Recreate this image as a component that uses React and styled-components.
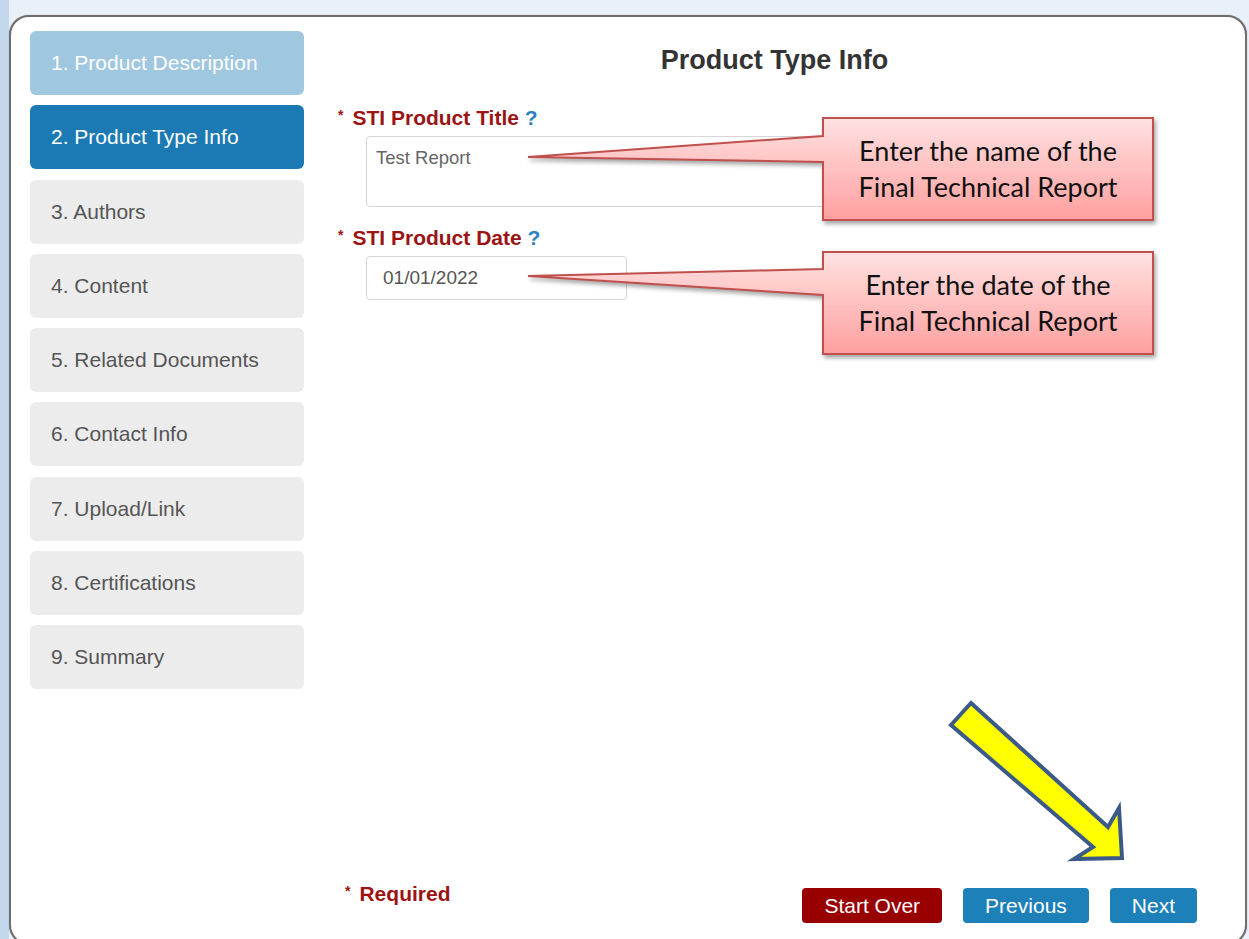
import React from 'react'
import styled, { createGlobalStyle } from 'styled-components'

const GlobalStyle = createGlobalStyle`
  html, body {
    margin: 0;
    padding: 0;
    overflow: hidden;
  }
  body {
    font-family: "Liberation Sans", Arial, sans-serif;
    background: #eaf0f7;
  }
`

const steps = [
  { label: '1. Product Description', state: 'done' },
  { label: '2. Product Type Info', state: 'active' },
  { label: '3. Authors' },
  { label: '4. Content' },
  { label: '5. Related Documents' },
  { label: '6. Contact Info' },
  { label: '7. Upload/Link' },
  { label: '8. Certifications' },
  { label: '9. Summary' },
]

function Callout({ x, y, w, h, b1, b2, tip, lines, id }) {
  const d = `M0,0 H${w} V${h} H0 V${b2} L${tip[0]},${tip[1]} L0,${b1} Z`
  return (
    <CalloutBox style={{ left: x, top: y, width: w, height: h }}>
      <CalloutShape width={w} height={h} overflow="visible">
        <defs>
          <linearGradient id={id} x1="0" y1="0" x2="0" y2={h} gradientUnits="userSpaceOnUse">
            <stop offset="0" stopColor="#ffe2e2" />
            <stop offset="1" stopColor="#ff9f9f" />
          </linearGradient>
        </defs>
        <path d={d} fill={`url(#${id})`} stroke="#c0504d" strokeWidth="2" />
      </CalloutShape>
      <CalloutText>
        {lines.map(l => <span key={l}>{l}</span>)}
      </CalloutText>
    </CalloutBox>
  )
}

function App() {
  return (
    <Page>
      <GlobalStyle />
      <Panel>
        <Sidebar>
          {steps.map(s => (
            <Step key={s.label} $state={s.state}>{s.label}</Step>
          ))}
        </Sidebar>
        <Main>
          <Title>Product Type Info</Title>
          <Form>
            <Label><Star>*</Star>STI Product Title <Help>?</Help></Label>
            <TextArea defaultValue="Test Report" />
            <Label><Star>*</Star>STI Product Date <Help>?</Help></Label>
            <Input defaultValue="01/01/2022" />
          </Form>
          <Footer>
            <Required><Star>*</Star>Required</Required>
            <Buttons>
              <Button $tone="red">Start Over</Button>
              <Button>Previous</Button>
              <Button>Next</Button>
            </Buttons>
          </Footer>
        </Main>
      </Panel>

      <Callout
        id="tip-title"
        x={823} y={118} w={330} h={102}
        b1={18} b2={44} tip={[-295, 39]}
        lines={['Enter the name of the', 'Final Technical Report']}
      />
      <Callout
        id="tip-date"
        x={823} y={252} w={330} h={102}
        b1={17} b2={43} tip={[-295, 24]}
        lines={['Enter the date of the', 'Final Technical Report']}
      />

      {/* pointer toward the Next button */}
      <Arrow width="200" height="180" viewBox="940 695 200 180">
        <polygon
          points="971,703 1108,827 1119,808 1122,858 1074,859 1093,847 951,725"
          fill="#ffff00"
          stroke="#3b5a88"
          strokeWidth="4"
          strokeLinejoin="miter"
        />
      </Arrow>
    </Page>
  )
}

const Page = styled.div`
  position: relative;
  width: 1249px;
  height: 939px;
  padding: 15px 0 0 9px;
  box-sizing: border-box;
  background: linear-gradient(to right, #c3d8ee 9px, #eaf0f7 9px);
  overflow: hidden;
`

const Panel = styled.div`
  display: flex;
  width: 1238px;
  height: 930px;
  box-sizing: border-box;
  background: #fff;
  border: 2px solid #6e6e6e;
  border-radius: 20px;
  box-shadow: 0 0 1px rgba(0, 0, 0, 0.4);
`

const Sidebar = styled.div`
  display: flex;
  flex-direction: column;
  gap: 10.25px;
  width: 274px;
  padding: 14px 0 0 19px;
  flex-shrink: 0;
`

const Step = styled.div`
  display: flex;
  align-items: center;
  height: 64px;
  padding-left: 21px;
  border-radius: 6px;
  font-size: 21px;
  color: ${p => (p.$state ? '#fff' : '#555')};
  background: ${p =>
    p.$state === 'active' ? '#1b7ab4' : p.$state === 'done' ? '#9fc7e0' : '#ececec'};
`

const Main = styled.div`
  flex: 1;
  display: flex;
  flex-direction: column;
`

const Title = styled.h1`
  margin: 28px 0 0 0;
  text-align: center;
  font-size: 27px;
  line-height: 30px;
  font-weight: 700;
  color: #333;
`

const Form = styled.div`
  display: flex;
  flex-direction: column;
  align-items: flex-start;
  padding: 29px 0 0 34px;
`

const Label = styled.div`
  font-size: 21px;
  line-height: 22px;
  font-weight: 700;
  color: #9c1313;
  margin-bottom: 7px;
`

const Star = styled.span`
  font-size: 14px;
  vertical-align: 5px;
  margin-right: 9px;
  color: #9c1313;
`

const Help = styled.span`
  color: #2f80c0;
`

const TextArea = styled.textarea`
  width: 500px;
  height: 71px;
  box-sizing: border-box;
  margin: 0 0 17px 28px;
  padding: 10px 9px;
  border: 1px solid #d6d6d6;
  border-radius: 4px;
  font-family: "Liberation Sans", Arial, sans-serif;
  font-size: 18.5px;
  color: #666;
  resize: none;
  outline: none;
`

const Input = styled.input`
  width: 261px;
  height: 44px;
  box-sizing: border-box;
  margin-left: 28px;
  padding: 0 16px;
  border: 1px solid #d6d6d6;
  border-radius: 4px;
  font-family: "Liberation Sans", Arial, sans-serif;
  font-size: 19px;
  color: #555;
  outline: none;
`

const Footer = styled.div`
  margin-top: auto;
  display: flex;
  align-items: flex-end;
  justify-content: space-between;
  padding: 0 48px 20px 41px;
`

const Required = styled.div`
  font-size: 21px;
  line-height: 22px;
  font-weight: 700;
  color: #9c1313;
  margin-bottom: 18px;
  ${Star} {
    margin-right: 9px;
  }
`

const Buttons = styled.div`
  display: flex;
  gap: 21px;
`

const Button = styled.button`
  height: 35px;
  padding: 0 22px;
  border: none;
  border-radius: 4px;
  font-family: "Liberation Sans", Arial, sans-serif;
  font-size: 21px;
  color: #fff;
  background: ${p => (p.$tone === 'red' ? '#990000' : '#1e80b9')};
  cursor: pointer;
`

const CalloutBox = styled.div`
  position: absolute;
  display: flex;
  align-items: center;
  justify-content: center;
`

const CalloutShape = styled.svg`
  position: absolute;
  left: 0;
  top: 0;
  filter: drop-shadow(2px 3px 2px rgba(0, 0, 0, 0.35));
`

const CalloutText = styled.div`
  position: relative;
  display: flex;
  flex-direction: column;
  align-items: center;
  font-family: Lato, "Open Sans", sans-serif;
  font-size: 27px;
  line-height: 36px;
  color: #111;
`

const Arrow = styled.svg`
  position: absolute;
  left: 940px;
  top: 695px;
  overflow: visible;
`

export default App
